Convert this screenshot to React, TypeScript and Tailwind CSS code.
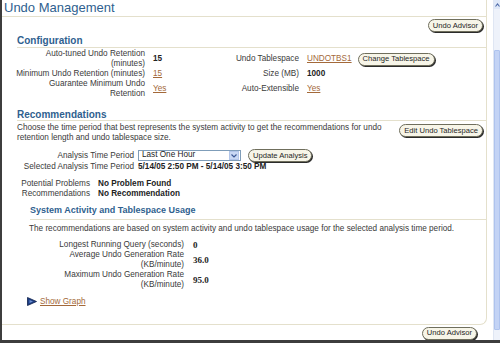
import React from 'react';

const Btn = ({ children }: { children: React.ReactNode }) => (
  <span className="inline-flex items-center h-[13px] px-[4px] rounded-full border border-[#6f6e5c] bg-[#f7f5e8] shadow-[1px_1px_0_#2b2b2b] text-[7.6px] leading-none text-[#1f1f1f] whitespace-nowrap">
    {children}
  </span>
);

const Link = ({ children }: { children: React.ReactNode }) => (
  <span className="text-[#a3693a] underline underline-offset-1">{children}</span>
);

const Label = ({ children }: { children: React.ReactNode }) => (
  <div className="text-right text-[#3a3a3a]">{children}</div>
);

export default function App() {
  return (
    <div className="w-[500px] h-[343px] flex bg-white border-l-2 border-b-[3px] border-[#3d3d3d] overflow-hidden font-['Liberation_Sans',Arial,sans-serif] text-[8.2px] text-[#222]">
      {/* page */}
      <div className="flex-1 flex flex-col">
        <div className="mr-[6px] border-r border-b border-[#e4e0cc] rounded-br-[7px] pb-[17px]">
          <h1 className="pl-[2px] h-[17px] text-[13px] leading-[16px] text-[#2f5f8f] border-b border-[#e4e0cc]">
            Undo Management
          </h1>
          <div className="flex justify-end pr-[3px] mt-[2px]">
            <Btn>Undo Advisor</Btn>
          </div>

          {/* Configuration */}
          <h2 className="ml-[15px] mt-[3px] text-[10px] leading-[12px] font-bold text-[#2f5f8f] border-b border-[#e4e0cc]">
            Configuration
          </h2>
          <div className="ml-[12px] mt-[1px] grid grid-cols-[131px_60px_78px_auto] gap-x-[8px] items-center leading-[10px]">
            <Label>Auto-tuned Undo Retention (minutes)</Label>
            <div className="font-bold">15</div>
            <Label>Undo Tablespace</Label>
            <div className="flex items-center gap-[6px]">
              <Link>UNDOTBS1</Link>
              <Btn>Change Tablespace</Btn>
            </div>

            <Label>Minimum Undo Retention (minutes)</Label>
            <div><Link>15</Link></div>
            <Label>Size (MB)</Label>
            <div className="font-bold">1000</div>

            <Label>Guarantee Minimum Undo Retention</Label>
            <div><Link>Yes</Link></div>
            <Label>Auto-Extensible</Label>
            <div><Link>Yes</Link></div>
          </div>

          {/* Recommendations */}
          <h2 className="ml-[15px] mt-[10px] text-[10px] leading-[11px] font-bold text-[#2f5f8f] border-b border-[#e4e0cc]">
            Recommendations
          </h2>
          <div className="ml-[15px] mt-[2px] flex justify-between pr-[3px]">
            <p className="w-[372px] leading-[9.5px] text-[#3a3a3a]">
              Choose the time period that best represents the system activity to get the recommendations for undo retention length and undo tablespace size.
            </p>
            <div className="mt-[1px]">
              <Btn>Edit Undo Tablespace</Btn>
            </div>
          </div>

          <div className="ml-[15px] mt-[7px] grid grid-cols-[117px_auto] gap-x-[4px] items-center leading-[10px]">
            <Label>Analysis Time Period</Label>
            <div className="flex items-center h-[13px]">
              <div className="w-[103px] h-[11px] flex items-center border border-[#7f9db9] bg-white">
                <span className="flex-1 pl-[3px] leading-none">Last One Hour</span>
                <span className="w-[10px] h-[9px] mr-[1px] flex items-center justify-center bg-[#c9d8f4] border border-[#b3c6ea]">
                  <svg width="6" height="4" viewBox="0 0 6 4">
                    <path d="M0.5 0.5 L3 3 L5.5 0.5" fill="none" stroke="#3d5a96" strokeWidth="1.2" />
                  </svg>
                </span>
              </div>
              <span className="ml-[7px]">
                <Btn>Update Analysis</Btn>
              </span>
            </div>
            <Label>Selected Analysis Time Period</Label>
            <div className="font-bold">5/14/05 2:50 PM - 5/14/05 3:50 PM</div>
          </div>

          <div className="ml-[15px] mt-[7px] grid grid-cols-[73px_auto] gap-x-[8px] leading-[10px]">
            <Label>Potential Problems</Label>
            <div className="font-bold">No Problem Found</div>
            <Label>Recommendations</Label>
            <div className="font-bold">No Recommendation</div>
          </div>

          {/* System Activity */}
          <h3 className="ml-[28px] mt-[5px] pb-[3px] text-[9px] leading-[12px] font-bold text-[#2f5f8f] border-b border-[#e4e0cc]">
            System Activity and Tablespace Usage
          </h3>
          <p className="ml-[27px] mt-[4px] leading-[9.5px] text-[#3a3a3a]">
            The recommendations are based on system activity and undo tablespace usage for the selected analysis time period.
          </p>
          <div className="ml-[56px] mt-[6px] grid grid-cols-[126px_auto] gap-x-[9px] items-center leading-[10px]">
            <Label>Longest Running Query (seconds)</Label>
            <div className="font-bold font-['Liberation_Serif',serif] text-[9px]">0</div>
            <Label>Average Undo Generation Rate (KB/minute)</Label>
            <div className="font-bold font-['Liberation_Serif',serif] text-[9px]">36.0</div>
            <Label>Maximum Undo Generation Rate (KB/minute)</Label>
            <div className="font-bold font-['Liberation_Serif',serif] text-[9px]">95.0</div>
          </div>

          <div className="ml-[25px] mt-[7px] flex items-center gap-[3px] leading-[10px]">
            <svg width="10" height="9" viewBox="0 0 10 9">
              <path d="M0.5 0.5 L9.5 4.5 L0.5 8.5 Z" fill="#1d3f86" stroke="#0e1f4a" strokeWidth="0.8" />
              <path d="M2.5 3 L6 4.5 L2.5 6 Z" fill="#6f8fd0" />
            </svg>
            <Link>Show Graph</Link>
          </div>
        </div>

        <div className="flex justify-end mr-[16px] mt-[2px]">
          <Btn>Undo Advisor</Btn>
        </div>
      </div>

      {/* scrollbar */}
      <div className="w-[7px] flex flex-col bg-[#eef2fa] border-l border-[#dfe6f3]">
        <div className="h-[9px] flex items-center justify-center bg-[#dfe8f8]">
          <svg width="5" height="4" viewBox="0 0 5 4">
            <path d="M0.5 3.5 L2.5 1 L4.5 3.5" fill="none" stroke="#4d6aa8" strokeWidth="1.1" />
          </svg>
        </div>
        <div className="mt-[41px] h-[280px] bg-[#c3d3f5] border border-[#aec3ee] rounded-[1px]" />
      </div>
    </div>
  );
}
